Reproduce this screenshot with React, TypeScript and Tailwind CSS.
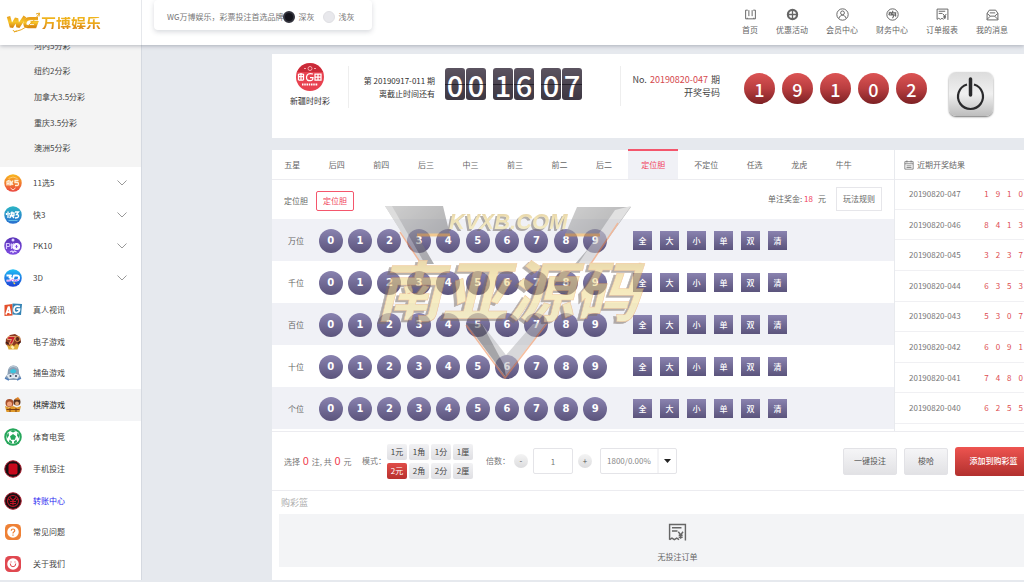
import React from "react";

type IconProps = { children: React.ReactNode; className?: string };

function Glyph({ children, className = "size-3" }: IconProps) {
  return (
    <svg viewBox="0 0 24 24" className={className} fill="none" stroke="currentColor" strokeWidth="1.8" aria-hidden="true">
      {children}
    </svg>
  );
}

const receipt = (
  <>
    <path d="M2 21V2h20v20" />
    <path d="M2 21l3-2 3 2 3-2 3 2" />
    <path d="M5 6h12M5 10h7" />
    <path d="M13 11l3 4 3-4M16 15v5M13.500 15.500h5M13.500 18h5" />
  </>
);

const topNav = [
  { label: "首页", icon: <><path d="M3 4v16h18V4M3 4h4M17 4h4M9 4v11M15 4v11M6 20v-2M18 20v-2" /></> },
  {
    label: "优惠活动",
    icon: (
      <>
        <circle cx="12" cy="12" r="8.500" strokeWidth="4" />
        <path d="M12 5v14M5 12h14" strokeWidth="2.400" />
      </>
    ),
  },
  {
    label: "会员中心",
    icon: (
      <>
        <circle cx="12" cy="12" r="10.500" />
        <circle cx="12" cy="9" r="3.500" />
        <path d="M5.500 19c1-4 3.500-5.500 6.500-5.500s5.500 1.500 6.500 5.500" />
      </>
    ),
  },
  {
    label: "财务中心",
    icon: (
      <>
        <circle cx="12" cy="12" r="10.500" />
        <path d="M5 9h14M6 13h13M13 5l-3 6 5 2-3 6M8 7l-3 6M17 8l1 8" strokeWidth="2" />
      </>
    ),
  },
  { label: "订单报表", icon: receipt },
  {
    label: "我的消息",
    icon: (
      <>
        <path d="M2 10v12h20V10" />
        <path d="M2 10l4-6h12l4 6-6 5H8z" />
        <path d="M7 9h10M8 15l-6 6M16 15l6 6" />
      </>
    ),
  },
];

const subItems = ["河内5分彩", "纽约2分彩", "加拿大3.5分彩", "重庆3.5分彩", "澳洲5分彩"];

function Disc({ from, to, children }: { from: string; to: string; children: React.ReactNode }) {
  const id = "disc" + from.slice(1);
  return (
    <svg viewBox="0 0 36 36" className="size-[18px]" aria-hidden="true">
      <defs>
        <linearGradient id={id} x1="0" y1="0" x2="0" y2="1">
          <stop offset="0" stopColor={from} />
          <stop offset="1" stopColor={to} />
        </linearGradient>
      </defs>
      <circle cx="18" cy="18" r="17.500" fill={`url(#${id})`} />
      {children}
    </svg>
  );
}

const menu: { label: string; open?: boolean; active?: boolean; blue?: boolean; icon: React.ReactNode }[] = [
  {
    label: "11选5",
    open: true,
    icon: (
      <Disc from="#f9b71c" to="#ea4540">
        <g fill="none" stroke="#fff0dc" strokeWidth="2.600">
          <path d="M6 23V15l4-2v10M6 19h4M13 13v10M13 14l5 8M18 13l-5 10M29 13h-7v4h5q2 0 2 3t-2 3h-5" />
          <path d="M13 28l5 4 5-4" strokeWidth="1.800" />
          <path d="M9 9q9-6 18 0" strokeWidth="1.500" stroke="#ffd98a" />
        </g>
      </Disc>
    ),
  },
  {
    label: "快3",
    open: true,
    icon: (
      <Disc from="#2bb5c4" to="#2a6fd0">
        <g fill="none" stroke="#fff" strokeWidth="2.600">
          <path d="M8 11v13M5 14v4M11 14v3M13 14h7v5h-9M16 11c0 7-1 10-5 13M16 19l4 5M22 12h7l-4 5q5 0 4 4-1 3-7 3" />
        </g>
        <path d="M9 29h18" stroke="#76d5f2" strokeWidth="1.500" />
      </Disc>
    ),
  },
  {
    label: "PK10",
    open: true,
    icon: (
      <Disc from="#5a34b8" to="#7d4be0">
        <g fill="none" stroke="#d8c8ff" strokeWidth="2.400">
          <path d="M5 24V13h4q3 0 3 3t-3 3H5M15 13v11M20 13l-5 5 5 6" />
          <circle cx="25" cy="19" r="6" fill="#efe8ff" stroke="#fff" />
        </g>
        <path d="M23 19h4M25 16v6" stroke="#7d4be0" strokeWidth="2" />
        <circle cx="18" cy="6" r="3" fill="#e3d6ff" />
        <path d="M12 30l4-2 2 3 3-3 4 2" stroke="#e3d6ff" strokeWidth="2.500" fill="none" />
      </Disc>
    ),
  },
  {
    label: "3D",
    open: true,
    icon: (
      <Disc from="#1fc0f5" to="#1c3fd6">
        <g fill="none" stroke="#fff" strokeWidth="4" strokeLinejoin="round">
          <path d="M5 13h9l-3 4q5 0 3 4-2 3-9 2" />
          <path d="M20 13h5q6 0 5 5t-6 5h-7z" />
        </g>
        <path d="M6 24q8 1 11-3 6 6 12 0" stroke="#d56df0" strokeWidth="2" fill="none" />
        <path d="M19 27l3 3" stroke="#ffd84a" strokeWidth="2.500" />
      </Disc>
    ),
  },
  {
    label: "真人视讯",
    icon: (
      <svg viewBox="0 0 36 36" className="size-[18px]" aria-hidden="true">
        <path d="M1 8l16-2v23L1 30z" fill="#e4502c" />
        <path d="M17 5l19 1-2 22-17-1z" fill="#3483b4" />
        <path d="M4 27l5-15h1l3 14M6 22h7" stroke="#fff" strokeWidth="3.500" fill="none" />
        <path d="M32 11q-11-3-12 5-1 8 6 7 5-1 5-7h-6" stroke="#fff" strokeWidth="3.500" fill="none" />
      </svg>
    ),
  },
  {
    label: "电子游戏",
    icon: (
      <svg viewBox="0 0 36 36" className="size-[18px]" aria-hidden="true">
        <path d="M4 12l8-8 10-2 10 6 2 9-5 8-20 3-6-6z" fill="#8a3a20" />
        <path d="M8 7h15l-7 15h-6l5-9H7z" fill="#c8202c" stroke="#f2c48a" strokeWidth="1.500" />
        <circle cx="27" cy="12" r="5" fill="#5c2a1c" stroke="#e09a50" strokeWidth="2" />
        <path d="M6 23l5 3 4-4 5 4 5-5 5 4-3 8H9z" fill="#e0ac3a" />
        <path d="M13 28l4-3 4 4-3 4z" fill="#fff2b0" />
        <path d="M4 18l5 4M28 20l5-2" stroke="#391c17" strokeWidth="3" />
      </svg>
    ),
  },
  {
    label: "捕鱼游戏",
    icon: (
      <svg viewBox="0 0 36 36" className="size-[18px]" aria-hidden="true">
        <path d="M7 20q0-17 12-17t11 16l4 8-6 5H9l-7-5z" fill="#8ba0b5" />
        <path d="M10 10q8-8 17 0l-2-5-7-2-6 2z" fill="#b9c6d3" />
        <path d="M12 14q6-8 13 0l-3 4h-8z" fill="#39c3dc" />
        <path d="M5 22l10-3 3 4 4-4 9 3-4 8-8-2-9 2z" fill="#dfe8f0" />
        <circle cx="13" cy="24" r="2" fill="#33445b" />
        <circle cx="24" cy="24" r="2" fill="#33445b" />
        <path d="M2 28l8 4M34 28l-8 4" stroke="#5480bb" strokeWidth="3" />
      </svg>
    ),
  },
  {
    label: "棋牌游戏",
    active: true,
    icon: (
      <svg viewBox="0 0 36 36" className="size-[18px]" aria-hidden="true">
        <circle cx="11" cy="14" r="8" fill="#a8502c" />
        <circle cx="26" cy="12" r="7" fill="#5a3520" />
        <circle cx="11" cy="16" r="5" fill="#f2a37c" />
        <circle cx="26" cy="15" r="4" fill="#e8ac78" />
        <path d="M20 7l8-5 5 6z" fill="#e0852a" />
        <path d="M2 20l8 3 8-3 8 3 8-3-3 12H5z" fill="#e09a2c" />
        <path d="M5 27h26M12 24v8M24 24v8" stroke="#7a3d14" strokeWidth="2" />
      </svg>
    ),
  },
  {
    label: "体育电竞",
    icon: (
      <svg viewBox="0 0 36 36" className="size-[18px]" aria-hidden="true">
        <circle cx="18" cy="18" r="17.500" fill="#25a65a" />
        <circle cx="18" cy="18" r="13.500" fill="#fff" />
        <path d="M18 12l6 4.500-2.300 7h-7.400L12 16.500z" fill="#25a65a" />
        <path d="M12 6l6 3 6-3-6-2zM5 15l4-6 1 6-4 6zM31 15l-4-6-1 6 4 6zM10 28l1-5 5 4v4zM26 28l-1-5-5 4v4z" fill="#25a65a" />
      </svg>
    ),
  },
  {
    label: "手机投注",
    icon: (
      <svg viewBox="0 0 36 36" className="size-[18px]" aria-hidden="true">
        <circle cx="18" cy="18" r="16.500" fill="#161012" stroke="#a5182a" strokeWidth="2" />
        <rect x="9" y="7" width="18" height="22" rx="4" fill="#c8081c" />
      </svg>
    ),
  },
  {
    label: "转账中心",
    blue: true,
    icon: (
      <svg viewBox="0 0 36 36" className="size-[18px]" aria-hidden="true">
        <circle cx="18" cy="18" r="16.500" fill="#161012" stroke="#a5182a" strokeWidth="2" />
        <g fill="none" stroke="#c01426" strokeWidth="2.200">
          <circle cx="18" cy="18" r="11" />
          <path d="M12 11l6 6 6-6M18 17v10M12 19h12M12 23h12M8 14l4 2M28 14l-4 2" />
        </g>
      </svg>
    ),
  },
  {
    label: "常见问题",
    icon: (
      <svg viewBox="0 0 36 36" className="size-[18px]" aria-hidden="true">
        <rect x="2" y="2" width="32" height="32" rx="9" fill="#ee8136" />
        <circle cx="18" cy="18" r="11.500" fill="#fff" />
        <path d="M14.500 15.500q0-3.500 3.500-3.500t3.500 3q0 2-2 3-1.500 1-1.500 3M18 23v2.500" stroke="#ee8136" strokeWidth="2.400" fill="none" />
      </svg>
    ),
  },
  {
    label: "关于我们",
    icon: (
      <svg viewBox="0 0 36 36" className="size-[18px]" aria-hidden="true">
        <rect x="2" y="2" width="32" height="32" rx="9" fill="#e04850" />
        <circle cx="18" cy="18" r="11.500" fill="#fff" />
        <path d="M12.500 17q0 6.500 5.500 6.500t5.500-6.500M14 13v2M22 13v2" stroke="#e04850" strokeWidth="2" fill="none" />
      </svg>
    ),
  },
];

const tabs = ["五星", "后四", "前四", "后三", "中三", "前三", "前二", "后二", "定位胆", "不定位", "任选", "龙虎", "牛牛"];
const rows = ["万位", "千位", "百位", "十位", "个位"];
const picks = ["全", "大", "小", "单", "双", "清"];
const modes = ["1元", "1角", "1分", "1厘", "2元", "2角", "2分", "2厘"];
const results = [
  ["20190820-047", "1910"],
  ["20190820-046", "8413"],
  ["20190820-045", "3237"],
  ["20190820-044", "6353"],
  ["20190820-043", "5307"],
  ["20190820-042", "6091"],
  ["20190820-041", "7480"],
  ["20190820-040", "6255"],
];

function Header() {
  return (
    <header className="relative z-20 flex h-[45px] items-start bg-white shadow-[0_1px_4px_rgba(60,70,90,0.35)]">
      <a href="#home" className="flex h-full w-[142px] items-center border-r border-[#e6e8ec] pl-[6px]">
        <svg viewBox="0 0 70 46" className="h-[23px] w-[35px]" aria-label="WG" role="img">
          <defs>
            <linearGradient id="gold" x1="0" y1="0" x2="0" y2="1">
              <stop offset="0" stopColor="#e8a01c" />
              <stop offset="0.5" stopColor="#f7c62a" />
              <stop offset="1" stopColor="#d98a12" />
            </linearGradient>
          </defs>
          <path d="M5 11l6 21 10-17 3 17L38 11" fill="none" stroke="url(#gold)" strokeWidth="7" strokeLinejoin="bevel" />
          <path d="M64 15H48q-8 0-10 8t6 8h14l3-8H49" fill="none" stroke="url(#gold)" strokeWidth="6.500" />
          <path d="M16 42Q46 36 66 6M60 6l7-2-1 7M14 38q0 5 8 2" fill="none" stroke="#e9a820" strokeWidth="2" />
        </svg>
        <span className="bg-linear-to-b from-[#f0b51e] via-[#eda91c] to-[#d98412] bg-clip-text text-[15px] font-bold text-transparent">万博娱乐</span>
      </a>
      <div className="ml-3 flex h-[30px] w-[218px] items-center rounded-sm bg-white pt-1 pl-[13px] text-[#777] shadow-[0_2px_5px_rgba(60,70,90,0.2)]">
        <span>WG万博娱乐，彩票投注首选品牌</span>
        <label className="mr-[9px] flex items-center gap-[3px]">
          <input type="radio" name="theme" defaultChecked className="size-3 appearance-none rounded-full border-2 border-[#33333d] bg-[#15151d]" />
          深灰
        </label>
        <label className="flex items-center gap-[3px]">
          <input type="radio" name="theme" className="size-3 appearance-none rounded-full border border-[#e0e0e4] bg-[#e8e8ec]" />
          浅灰
        </label>
      </div>
      <nav className="mr-4 ml-auto flex gap-[18px] pt-2">
        {topNav.map((n) => (
          <a key={n.label} href="#nav" className="flex flex-col items-center gap-[3px] leading-[11px] text-[#666]">
            <Glyph className="size-[13px]">{n.icon}</Glyph>
            {n.label}
          </a>
        ))}
      </nav>
    </header>
  );
}

function Sidebar() {
  return (
    <aside className="flex w-[142px] shrink-0 flex-col border-r border-[#d5d9e0] bg-white text-[#444]">
      <div className="-mt-3 bg-[#f4f4f4] pb-[6px]">
        <ul className="grid h-[128px] grid-rows-5">
          {subItems.map((s) => (
            <li key={s} className="flex items-center pl-[34px]">
              <a href="#game">{s}</a>
            </li>
          ))}
        </ul>
      </div>
      <ul className="grid flex-1 auto-rows-fr">
        {menu.map((m) => (
          <li key={m.label} className={m.active ? "bg-[#f3f4f6] text-[#222]" : m.blue ? "text-[#2a1ff0]" : ""}>
            <a href="#menu" className="flex h-full items-center pl-1">
              {m.icon}
              <span className="ml-[11px]">{m.label}</span>
              {m.open && (
                <svg viewBox="0 0 10 6" className="mr-[14px] ml-auto h-[6px] w-[10px]" fill="none" stroke="#999" aria-hidden="true">
                  <path d="M0.500 0.500L5 5l4.500-4.500" />
                </svg>
              )}
            </a>
          </li>
        ))}
      </ul>
    </aside>
  );
}

function DrawPanel() {
  return (
    <section className="flex h-[84px] items-start bg-white">
      <div className="mt-[9px] flex w-[76px] flex-col items-center gap-1 text-[#333]">
        <svg viewBox="0 0 56 56" className="size-7" aria-hidden="true">
          <circle cx="28" cy="28" r="28" fill="#e8414f" />
          <path d="M2 18a28 28 0 0 1 52 0z" fill="#c92a38" />
          <circle cx="28" cy="11" r="4" fill="none" stroke="#f7a8ae" strokeWidth="2" />
          <path d="M16 11h4M36 11h4" stroke="#f7a8ae" strokeWidth="2" />
          <g fill="none" stroke="#fff" strokeWidth="2.500">
            <path d="M5 22h10M5 27h10M5 34h10M10 20v14M5 22v12M15 22v12" />
            <path d="M34 22q-12-3-13 6t10 7q3-1 3-6h-6" />
            <path d="M38 22h12v12H38zM38 28h12M44 22v12" />
          </g>
          <path d="M12 43h32" stroke="#fff" strokeWidth="4" strokeDasharray="3 1.500" />
        </svg>
        新疆时时彩
      </div>
      <div className="mt-3 flex h-[42px] w-[87px] flex-col items-end justify-center border-l border-[#eee] text-right leading-[13px] whitespace-nowrap text-[#333]">
        <span>第 20190917-011 期</span>
        <span>离截止时间还有</span>
      </div>
      <div className="mt-[14px] ml-[10px] flex gap-[7px]">
        {["00", "16", "07"].map((pair) => (
          <div key={pair} className="flex gap-px">
            {pair.split("").map((d, i) => (
              <span
                key={i}
                className="relative flex h-8 w-5 items-center justify-center rounded-[3px] bg-linear-to-b from-[#5b5360] to-[#3d3742] text-[29px] leading-8 font-medium text-white"
              >
                {d}
                <i className="absolute inset-x-0 top-4 h-px bg-[#15121a]/70" />
              </span>
            ))}
          </div>
        ))}
      </div>
      <div className="mt-3 ml-[38px] flex h-[40px] w-[100px] flex-col items-end justify-center border-l border-[#eee] text-[9px] leading-[13px] whitespace-nowrap text-[#444]">
        <span>
          No. <b className="mx-px font-normal text-[#d5484d]">20190820-047</b> 期
        </span>
        <span>开奖号码</span>
      </div>
      <div className="mt-[19px] ml-6 flex gap-[7px]">
        {"19102".split("").map((d, i) => (
          <span
            key={i}
            className="flex size-[31px] items-center justify-center rounded-full bg-linear-to-b from-[#dc5454] via-[#b93e40] to-[#7d2124] text-[18px] font-medium text-white"
          >
            {d}
          </span>
        ))}
      </div>
      <button
        aria-label="开关"
        className="mt-[18px] ml-[22px] flex size-[44px] items-center justify-center rounded-[7px] bg-linear-to-b from-[#dcdcdc] via-[#f0f0f0] to-[#bdbdbd] shadow-[0_1px_2px_rgba(0,0,0,0.55)]"
      >
        <svg viewBox="0 0 44 44" className="size-[44px]" fill="none" stroke="#2a2a2c" aria-hidden="true">
          <path d="M18 12.500a12.500 12.500 0 1 0 7 0" strokeWidth="2.200" />
          <path d="M21.500 7v16" strokeWidth="3.500" strokeLinecap="round" />
        </svg>
      </button>
    </section>
  );
}

function Watermark() {
  return (
    <svg viewBox="0 0 280 180" className="pointer-events-none absolute top-[52px] left-[104px] h-[180px] w-[280px] opacity-55" aria-hidden="true">
      <defs>
        <linearGradient id="wmGold" x1="0" y1="0" x2="0" y2="1">
          <stop offset="0" stopColor="#bd9a55" />
          <stop offset="0.400" stopColor="#ecd27c" />
          <stop offset="1" stopColor="#f8f0b0" />
        </linearGradient>
        <linearGradient id="wmSteel" x1="0" y1="0" x2="1" y2="1">
          <stop offset="0" stopColor="#a9a9a9" />
          <stop offset="1" stopColor="#626266" />
        </linearGradient>
      </defs>
      <path d="M9 4h58l7 29H41l17 29H46z" fill="url(#wmSteel)" />
      <path d="M201 5h54l-41 57h-15l25-29h-35z" fill="url(#wmSteel)" />
      <path d="M255 4l-41 58h-12L239 8z" fill="#c9c9c9" />
      <path d="M9 4l7 0 33 58h-4z" fill="#c2c2c2" />
      <path d="M41 33h33M189 33h35" stroke="#f0a83c" strokeWidth="3" />
      <path d="M90 121l39 54 43-56-15 3-27 31-24-31z" fill="#b9b9bc" />
      <path d="M90 121l40 54-2-12-22-41z" fill="#5d5d62" />
      <path d="M24 30l22 33M90 123l39 53 43-56M214 63l28-42" fill="none" stroke="#f08a50" strokeWidth="1.500" />
      <g className="drop-shadow-[-2px_2px_0px_#77706a]">
        <text x="73" y="27" fill="url(#wmGold)" className="font-['Liberation_Sans'] text-[22px] font-bold italic">KVXB.COM</text>
      </g>
      <g className="drop-shadow-[-3px_2px_0px_#7d7068]">
        <text x="0" y="114" fill="url(#wmGold)" stroke="#e89a50" strokeWidth="0.500" className="text-[66px] font-bold italic">南亚源码</text>
      </g>
    </svg>
  );
}

function BetBoard() {
  return (
    <div className="relative w-[623px] shrink-0 border-r border-[#e8eaee]">
      <nav className="h-[30px] border-b border-[#ececf0]">
        <div className="grid h-full w-[596px] grid-cols-[repeat(8,1fr)_50px_56px_repeat(3,1fr)]">
          {tabs.map((t) => (
            <button
              key={t}
              className={
                t === "定位胆"
                  ? "-mt-px border-t-2 border-[#f4566c] bg-[#f0f1f6] text-[#f0405a]"
                  : t.length === 3
                    ? "text-[#666]"
                    : "pr-1 text-[#666]"
              }
            >
              {t}
            </button>
          ))}
        </div>
      </nav>
      <div className="flex h-[39px] items-center pt-[3px] pl-3 text-[#666]">
        <span>定位胆</span>
        <button className="ml-2 h-5 w-[38px] rounded-[2px] border border-[#f4566c] text-[#f0405a]">定位胆</button>
        <span className="-mt-[5px] ml-auto">
          单注奖金: <b className="font-normal text-[#f0405a]">18</b>
        </span>
        <span className="-mt-[5px] ml-[5px]">元</span>
        <button className="-mt-[5px] mr-3 ml-[10px] h-6 w-[46px] border border-[#e6e6ea]">玩法规则</button>
      </div>
      {rows.map((r) => (
        <div key={r} className="flex h-[42px] items-center pt-px pl-4 odd:bg-[#f0f1f6] even:bg-white">
          <span className="w-7 text-[#666]">{r}</span>
          <div className="grid w-[294px] grid-cols-10 justify-items-center">
            {"0123456789".split("").map((d) => (
              <button
                key={d}
                className="size-6 rounded-full bg-linear-to-b from-[#8a83b0] to-[#5b547c] font-['DejaVu_Sans'] text-[10px] font-bold text-white"
              >
                {d}
              </button>
            ))}
          </div>
          <div className="ml-[23px] flex gap-2">
            {picks.map((p) => (
              <button key={p} className="size-[19px] bg-linear-to-b from-[#8a83b0] to-[#5b547c] font-medium text-white">
                {p}
              </button>
            ))}
          </div>
        </div>
      ))}
      <Watermark />
    </div>
  );
}

function Results() {
  return (
    <div className="min-w-0 flex-1 text-[#666]">
      <h2 className="flex h-[30px] items-center gap-[3px] border-b border-[#ececf0] pl-[9px]">
        <Glyph className="size-[10px]">
          <path d="M2 4h20v18H2zM2 9h20M7 1v5M17 1v5M6 14h12M6 18h12" />
        </Glyph>
        近期开奖结果
      </h2>
      <table className="h-[244px] w-full">
        <tbody>
          {results.map(([no, digits]) => (
            <tr key={no} className="border-b border-[#f0f0f3]">
              <td className="pl-[14px] text-[#777]">{no}</td>
              <td>
                <span className="flex justify-end gap-[7px] pr-px text-[#dd4c50]">
                  {digits.split("").map((d, i) => (
                    <span key={i}>{d}</span>
                  ))}
                </span>
              </td>
            </tr>
          ))}
        </tbody>
      </table>
    </div>
  );
}

function Controls() {
  const round = "size-[14px] rounded-full bg-linear-to-b from-[#f4f4f4] to-[#dcdcde] leading-[12px] text-[#555]";
  const grey = "h-[27px] rounded-[2px] border border-[#e2e2e6] bg-linear-to-b from-[#f5f5f7] to-[#e2e2e5] text-[#555]";
  return (
    <div className="flex h-[60px] items-center border-y border-[#ececf0] pl-3 text-[#777]">
      <span className="w-[78px] whitespace-nowrap">
        选择 <b className="mx-px text-[11px] font-normal text-[#f04050]">0</b> 注, 共 <b className="mx-px text-[11px] font-normal text-[#f04050]">0</b> 元
      </span>
      <span className="w-[25px] whitespace-nowrap">模式：</span>
      <div className="grid grid-cols-4 gap-x-[2px] gap-y-[3px]">
        {modes.map((m) => (
          <button
            key={m}
            className={
              m === "2元"
                ? "h-4 w-5 rounded-[2px] bg-linear-to-b from-[#e04c48] to-[#b8302e] text-white"
                : "h-4 w-5 rounded-[2px] bg-linear-to-b from-[#f2f2f4] to-[#dfdfe3] text-[#444]"
            }
          >
            {m}
          </button>
        ))}
      </div>
      <label htmlFor="times" className="ml-[13px] w-7 whitespace-nowrap">
        倍数：
      </label>
      <button className={round}>-</button>
      <input id="times" defaultValue="1" className="mx-[5px] h-[26px] w-10 rounded-[2px] border border-[#e4e4e8] text-center text-[#777]" />
      <button className={round}>+</button>
      <div className="relative ml-2">
        <select aria-label="返点" className="h-[26px] w-[77px] appearance-none rounded-[2px] border border-[#e4e4e8] bg-white pl-[6px] text-[#888]">
          <option>1800/0.00%</option>
        </select>
        <svg viewBox="0 0 20 26" className="pointer-events-none absolute top-0 right-0 h-[26px] w-5" aria-hidden="true">
          <path d="M1 1v24" stroke="#e8e8ec" />
          <path d="M7 11h7l-3.500 4z" fill="#222" />
        </svg>
      </div>
      <button className={`${grey} ml-auto w-[54px]`}>一键投注</button>
      <button className={`${grey} mx-[7px] w-11`}>梭哈</button>
      <button className="h-[29px] w-[69px] rounded-l-[3px] bg-linear-to-b from-[#ee5450] to-[#b2302e] pl-2 font-medium text-white">添加到购彩篮</button>
    </div>
  );
}

export default function App() {
  return (
    <div className="flex min-h-screen flex-col overflow-hidden bg-[#e6e9ee] pb-[2px] font-['Noto_Sans_CJK_SC',sans-serif] text-[8px] leading-3">
      <Header />
      <div className="flex flex-1">
        <Sidebar />
        <main className="flex min-w-0 flex-1 flex-col gap-3 pt-[9px] pl-[130px]">
          <DrawPanel />
          <section className="flex-1 bg-white">
            <div className="flex h-[281px]">
              <BetBoard />
              <Results />
            </div>
            <Controls />
            <div className="pl-[7px]">
              <h2 className="pt-[6px] pb-[5px] pl-[2px] text-[9px] text-[#aaa]">购彩篮</h2>
              <div className="flex h-[53px] flex-col items-center justify-between bg-[#f3f4f6] pt-[9px] pb-[4px] pl-[52px] text-[#666]">
                <Glyph className="size-[19px]">{receipt}</Glyph>
                无投注订单
              </div>
            </div>
          </section>
        </main>
      </div>
    </div>
  );
}
